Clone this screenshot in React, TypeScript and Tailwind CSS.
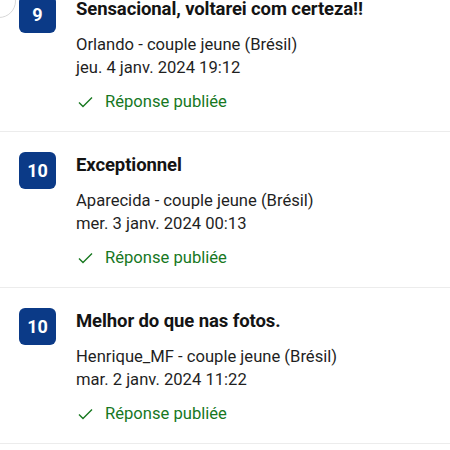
type Review = {
  score: number;
  title: string;
  author: string;
  date: string;
};

const reviews: Review[] = [
  {
    score: 9,
    title: "Sensacional, voltarei com certeza!!",
    author: "Orlando - couple jeune (Brésil)",
    date: "jeu. 4 janv. 2024 19:12",
  },
  {
    score: 10,
    title: "Exceptionnel",
    author: "Aparecida - couple jeune (Brésil)",
    date: "mer. 3 janv. 2024 00:13",
  },
  {
    score: 10,
    title: "Melhor do que nas fotos.",
    author: "Henrique_MF - couple jeune (Brésil)",
    date: "mar. 2 janv. 2024 11:22",
  },
];

function CheckIcon() {
  return (
    <svg width="15" height="12" viewBox="0 0 15 12" fill="none">
      <path d="M1 6.5 L5 10.5 L14 1.5" stroke="#17781f" strokeWidth="1.4" />
    </svg>
  );
}

function ReviewRow({ review }: { review: Review }) {
  return (
    <div className="flex gap-[20px] pl-[19px] pt-[20px] h-[156px] border-b border-[#ececec]">
      <div className="w-[37px] h-[37px] shrink-0 rounded-[6px] bg-[#0b3a87] text-white font-bold text-[18px] flex items-center justify-center">
        {review.score}
      </div>
      <div className="flex flex-col">
        <div className="text-[18.5px] font-bold text-[#141414] leading-[26px] tracking-[-0.1px]">
          {review.title}
        </div>
        <div className="mt-[11px] text-[16.6px] text-[#1f1f1f] leading-[23px]">
          <div>{review.author}</div>
          <div>{review.date}</div>
        </div>
        <div className="mt-[11px] flex items-center gap-[12px] pl-[2px] text-[16.6px] text-[#17781f] leading-[23px]">
          <CheckIcon />
          <span>Réponse publiée</span>
        </div>
      </div>
    </div>
  );
}

export default function App() {
  return (
    <div
      className="relative w-[450px] h-[450px] overflow-hidden bg-white"
      style={{ fontFamily: "Roboto, 'Noto Sans', sans-serif" }}
    >
      <div className="absolute left-[-18px] top-[-16px] w-[34px] h-[34px] rounded-full border border-[#d8d8d8]" />
      <div className="mt-[-24px] flex flex-col">
        {reviews.map((r) => (
          <ReviewRow key={r.date} review={r} />
        ))}
      </div>
    </div>
  );
}
